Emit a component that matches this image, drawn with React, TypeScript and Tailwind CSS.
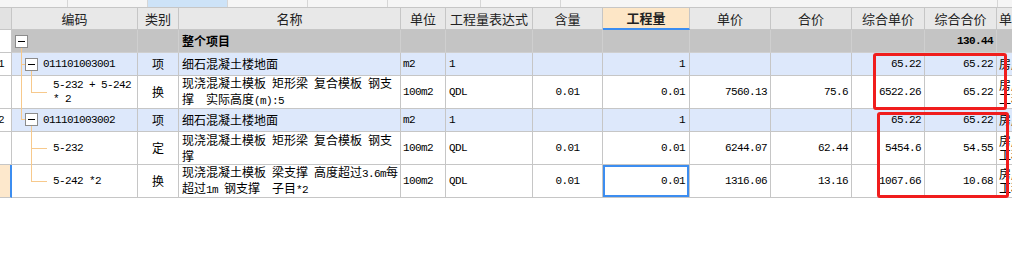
import React from "react";

const COLS =
  "grid grid-cols-[12px_126px_41px_222px_45px_87px_70px_87px_81px_81px_73px_72px_60px] grid-rows-[100%]";
const CN = "font-['Noto_Sans_CJK_SC',sans-serif] text-[12px]";
const NUM = "font-['Liberation_Mono','Noto_Sans_CJK_SC',monospace] text-[11px] tracking-[-0.6px]";
const LINE = "border-r border-b border-[#c6c6c6]";

// split a mixed string so ascii runs get the half-width mono face
function Mixed({ text }: { text: string }) {
  const parts = text.split(/([\x20-\x7e]+)/).filter((p) => p !== "");
  return (
    <>
      {parts.map((p, i) =>
        /^[\x20-\x7e]+$/.test(p) ? (
          <span key={i} className={NUM}>
            {p}
          </span>
        ) : (
          <span key={i}>{p}</span>
        )
      )}
    </>
  );
}

interface RowData {
  no?: string;
  code: string[];
  codePad: string;
  kind: string;
  name: string[];
  unit: string;
  expr: string;
  content: string;
  qty: string;
  price: string;
  total: string;
  uPrice: string;
  uTotal: string;
  last: string[];
  h: string;
  bg: string;
  active?: boolean;
}

const rows: RowData[] = [
  {
    no: "1",
    code: ["011101003001"],
    codePad: "pl-[31px]",
    kind: "项",
    name: ["细石混凝土楼地面"],
    unit: "m2",
    expr: "1",
    content: "",
    qty: "1",
    price: "",
    total: "",
    uPrice: "65.22",
    uTotal: "65.22",
    last: ["房屋建筑与装饰"],
    h: "h-[23px]",
    bg: "bg-[#dde8fb]",
  },
  {
    code: ["5-232 + 5-242", "* 2"],
    codePad: "pl-[41px]",
    kind: "换",
    name: ["现浇混凝土模板 矩形梁 复合模板 钢支", "撑  实际高度(m):5"],
    unit: "100m2",
    expr: "QDL",
    content: "0.01",
    qty: "0.01",
    price: "7560.13",
    total: "75.6",
    uPrice: "6522.26",
    uTotal: "65.22",
    last: ["房屋建筑与装饰", "工程"],
    h: "h-[33px]",
    bg: "bg-white",
  },
  {
    no: "2",
    code: ["011101003002"],
    codePad: "pl-[31px]",
    kind: "项",
    name: ["细石混凝土楼地面"],
    unit: "m2",
    expr: "1",
    content: "",
    qty: "1",
    price: "",
    total: "",
    uPrice: "65.22",
    uTotal: "65.22",
    last: ["房屋建筑与装饰"],
    h: "h-[23px]",
    bg: "bg-[#dde8fb]",
  },
  {
    code: ["5-232"],
    codePad: "pl-[41px]",
    kind: "定",
    name: ["现浇混凝土模板 矩形梁 复合模板 钢支", "撑"],
    unit: "100m2",
    expr: "QDL",
    content: "0.01",
    qty: "0.01",
    price: "6244.07",
    total: "62.44",
    uPrice: "5454.6",
    uTotal: "54.55",
    last: ["房屋建筑与装饰", "工程"],
    h: "h-[33px]",
    bg: "bg-white",
  },
  {
    code: ["5-242 *2"],
    codePad: "pl-[41px]",
    kind: "换",
    name: ["现浇混凝土模板 梁支撑 高度超过3.6m每", "超过1m 钢支撑  子目*2"],
    unit: "100m2",
    expr: "QDL",
    content: "0.01",
    qty: "0.01",
    price: "1316.06",
    total: "13.16",
    uPrice: "1067.66",
    uTotal: "10.68",
    last: ["房屋建筑与装饰", "工程"],
    h: "h-[33px]",
    bg: "bg-white",
    active: true,
  },
];

const headers = [
  "编码",
  "类别",
  "名称",
  "单位",
  "工程量表达式",
  "含量",
  "工程量",
  "单价",
  "合价",
  "综合单价",
  "综合合价",
];

function TreeLines() {
  const c = "#f7c98c";
  return (
    <svg
      className="absolute left-0 top-0 pointer-events-none"
      width="140"
      height="200"
      viewBox="0 0 140 200"
    >
      <g stroke={c} strokeWidth="1" fill="none" shapeRendering="crispEdges">
        <line x1="21.5" y1="48" x2="21.5" y2="120" />
        <line x1="21.5" y1="64.5" x2="25" y2="64.5" />
        <line x1="21.5" y1="119.5" x2="25" y2="119.5" />
        <line x1="31.5" y1="71" x2="31.5" y2="92.5" />
        <line x1="31.5" y1="92.5" x2="47" y2="92.5" />
        <line x1="31.5" y1="126" x2="31.5" y2="182" />
        <line x1="31.5" y1="148.5" x2="47" y2="148.5" />
        <line x1="31.5" y1="181.5" x2="47" y2="181.5" />
      </g>
      <g shapeRendering="crispEdges">
        <rect x="15.5" y="35.5" width="12" height="12" fill="#fff" stroke="#8c8c8c" />
        <line x1="18" y1="41.5" x2="25" y2="41.5" stroke="#000" />
        <rect x="25.5" y="58.5" width="12" height="12" fill="#fff" stroke="#8c8c8c" />
        <line x1="28" y1="64.5" x2="35" y2="64.5" stroke="#000" />
        <rect x="25.5" y="113.5" width="12" height="12" fill="#fff" stroke="#8c8c8c" />
        <line x1="28" y1="119.5" x2="35" y2="119.5" stroke="#000" />
      </g>
    </svg>
  );
}

export default function App() {
  return (
    <div className={`relative w-[1012px] h-[255px] overflow-hidden bg-white text-black ${CN}`}>
      {/* tab strip */}
      <div className="flex h-[8px] border-b border-[#c6c6c6] bg-[#f5f5f5]">
        <div className="w-[68px] border-r border-[#d6d6d6]" />
        <div className="w-[80px] border-r border-[#d6d6d6]" />
        <div className="w-[80px] border-r border-[#d6d6d6] bg-[#cde3f8]" />
        <div className="w-[80px] border-r border-[#d6d6d6]" />
        <div className="w-[80px] border-r border-[#d6d6d6]" />
        <div className="w-[93px] border-r border-[#d6d6d6]" />
        <div className="w-[80px] border-r border-[#d6d6d6]" />
        <div className="w-[437px] border-r border-[#d6d6d6]" />
        <div className="flex-1" />
      </div>

      <div className="w-[1057px]">
        {/* header */}
        <div className={`${COLS} h-[22px] bg-[#e8e8e8] text-[13px] leading-[18px] text-[#222]`}>
          <div className={`${LINE} bg-[#e2e2e2]`} />
          {headers.map((h) =>
            h === "工程量" ? (
              <div
                key={h}
                className="flex items-center justify-center overflow-hidden border-r border-[#c6c6c6] border-b-2 border-b-[#3c8df0] bg-[#fde6c6] font-bold"
              >
                {h}
              </div>
            ) : (
              <div key={h} className={`${LINE} flex items-center justify-center overflow-hidden whitespace-nowrap`}>
                {h}
              </div>
            )
          )}
          <div className={`${LINE} flex items-center overflow-hidden whitespace-nowrap pl-[2px]`}>
            单价构成文件
          </div>
        </div>

        {/* whole project row */}
        <div className={`${COLS} h-[23px] bg-[#c4c4c4]`}>
          <div className={`${LINE} bg-white`} />
          <div className="border-r border-b border-[#cfcfcf]" />
          <div className="border-r border-b border-[#cfcfcf]" />
          <div className="flex items-center border-r border-b border-[#cfcfcf] pl-[3px] font-bold">
            整个项目
          </div>
          <div className="border-r border-b border-[#cfcfcf]" />
          <div className="border-r border-b border-[#cfcfcf]" />
          <div className="border-r border-b border-[#cfcfcf]" />
          <div className="border-r border-b border-[#cfcfcf]" />
          <div className="border-r border-b border-[#cfcfcf]" />
          <div className="border-r border-b border-[#cfcfcf]" />
          <div className="border-r border-b border-[#cfcfcf]" />
          <div
            className={`flex items-center justify-end border-r border-b border-[#cfcfcf] pr-[3px] font-bold ${NUM}`}
          >
            130.44
          </div>
          <div className="border-r border-b border-[#cfcfcf]" />
        </div>

        {rows.map((r, i) => (
          <div key={i} className={`${COLS} ${r.h} ${r.bg} leading-[14px]`}>
            {r.active ? (
              <div className="border-b border-[#c6c6c6] border-r-2 border-r-[#3c8df0] bg-[#fde8cc]" />
            ) : (
              <div className={`${LINE} bg-white flex items-center overflow-hidden`}>
                {r.no && <span className={`${NUM} -ml-[2px]`}>{r.no}</span>}
              </div>
            )}
            <div className={`${LINE} ${r.codePad} flex flex-col justify-center ${NUM} whitespace-pre`}>
              {r.code.map((c, j) => (
                <div key={j}>{c}</div>
              ))}
            </div>
            <div className={`${LINE} flex items-center justify-center`}>{r.kind}</div>
            <div className={`${LINE} flex flex-col justify-center pl-[3px] whitespace-pre overflow-hidden`}>
              {r.name.map((n, j) => (
                <div key={j}>
                  <Mixed text={n} />
                </div>
              ))}
            </div>
            <div className={`${LINE} flex items-center pl-[2px] ${NUM}`}>{r.unit}</div>
            <div className={`${LINE} flex items-center pl-[3px] ${NUM}`}>{r.expr}</div>
            <div className={`${LINE} flex items-center justify-center ${NUM}`}>{r.content}</div>
            <div className={`${LINE} relative flex items-center justify-end pr-[4px] ${NUM}`}>
              {r.qty}
              {r.active && <div className="absolute inset-0 border-2 border-[#3c8df0]" />}
            </div>
            <div className={`${LINE} flex items-center justify-end pr-[3px] ${NUM}`}>{r.price}</div>
            <div className={`${LINE} flex items-center justify-end pr-[3px] ${NUM}`}>{r.total}</div>
            <div className={`${LINE} flex items-center justify-end pr-[3px] ${NUM}`}>{r.uPrice}</div>
            <div className={`${LINE} flex items-center justify-end pr-[3px] ${NUM}`}>{r.uTotal}</div>
            <div className={`${LINE} flex flex-col justify-center pl-[2px] whitespace-nowrap overflow-hidden`}>
              {r.last.map((t, j) => (
                <div key={j}>{t}</div>
              ))}
            </div>
          </div>
        ))}
      </div>

      <TreeLines />

      {/* red annotation boxes */}
      <div className="absolute left-[873px] top-[53px] w-[134px] h-[57px] rounded-[3px] border-[3px] border-[#f01d1d]" />
      <div className="absolute left-[877px] top-[112px] w-[132px] h-[86px] rounded-[3px] border-[3px] border-[#f01d1d]" />
    </div>
  );
}
